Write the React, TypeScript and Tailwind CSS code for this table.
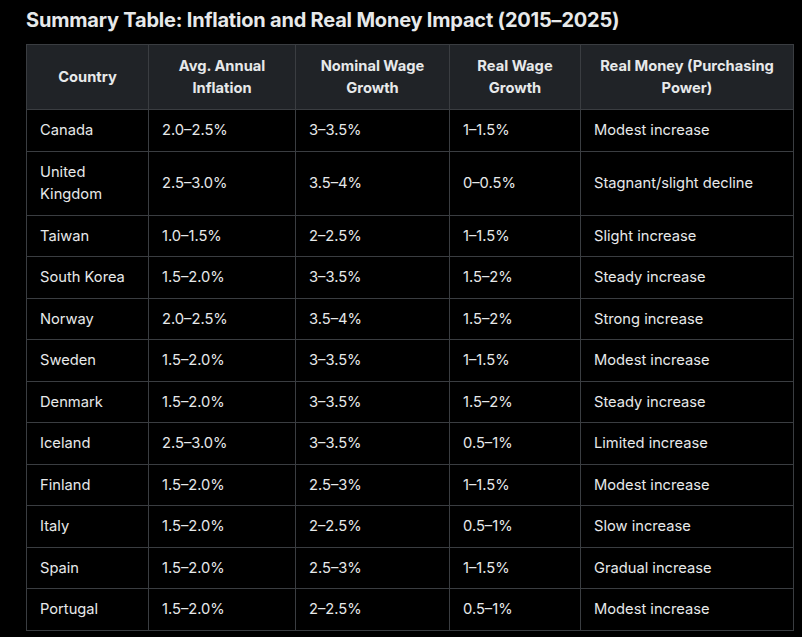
import React from 'react';

const rows = [
  ['Canada', '2.0–2.5%', '3–3.5%', '1–1.5%', 'Modest increase'],
  ['United Kingdom', '2.5–3.0%', '3.5–4%', '0–0.5%', 'Stagnant/slight decline'],
  ['Taiwan', '1.0–1.5%', '2–2.5%', '1–1.5%', 'Slight increase'],
  ['South Korea', '1.5–2.0%', '3–3.5%', '1.5–2%', 'Steady increase'],
  ['Norway', '2.0–2.5%', '3.5–4%', '1.5–2%', 'Strong increase'],
  ['Sweden', '1.5–2.0%', '3–3.5%', '1–1.5%', 'Modest increase'],
  ['Denmark', '1.5–2.0%', '3–3.5%', '1.5–2%', 'Steady increase'],
  ['Iceland', '2.5–3.0%', '3–3.5%', '0.5–1%', 'Limited increase'],
  ['Finland', '1.5–2.0%', '2.5–3%', '1–1.5%', 'Modest increase'],
  ['Italy', '1.5–2.0%', '2–2.5%', '0.5–1%', 'Slow increase'],
  ['Spain', '1.5–2.0%', '2.5–3%', '1–1.5%', 'Gradual increase'],
  ['Portugal', '1.5–2.0%', '2–2.5%', '0.5–1%', 'Modest increase'],
];

const headers = [
  'Country',
  'Avg. Annual Inflation',
  'Nominal Wage Growth',
  'Real Wage Growth',
  'Real Money (Purchasing Power)',
];

const widths = ['w-[122px]', 'w-[147px]', 'w-[154px]', 'w-[131px]', 'w-[213px]'];

export default function App() {
  return (
    <div className="min-h-screen bg-black text-[#e7e9ea] font-['Inter','Liberation_Sans',sans-serif] px-[26px] pt-[5px]">
      <h2 className="text-[20px] leading-[30px] font-bold tracking-[-0.2px]">
        Summary Table: Inflation and Real Money Impact (2015–2025)
      </h2>
      <table className="mt-[9px] w-[767px] table-fixed border-collapse text-[14.7px] leading-[22.5px]">
        <thead>
          <tr className="bg-[#202327]">
            {headers.map((h, i) => (
              <th
                key={h}
                className={`${widths[i]} border border-[#3a3d41] px-[13px] py-[9.5px] text-center font-bold`}
              >
                {h}
              </th>
            ))}
          </tr>
        </thead>
        <tbody>
          {rows.map((r) => (
            <tr key={r[0]}>
              {r.map((c, i) => (
                <td key={i} className="border border-[#3a3d41] px-[13px] py-[9px] align-middle">
                  {c}
                </td>
              ))}
            </tr>
          ))}
        </tbody>
      </table>
    </div>
  );
}
